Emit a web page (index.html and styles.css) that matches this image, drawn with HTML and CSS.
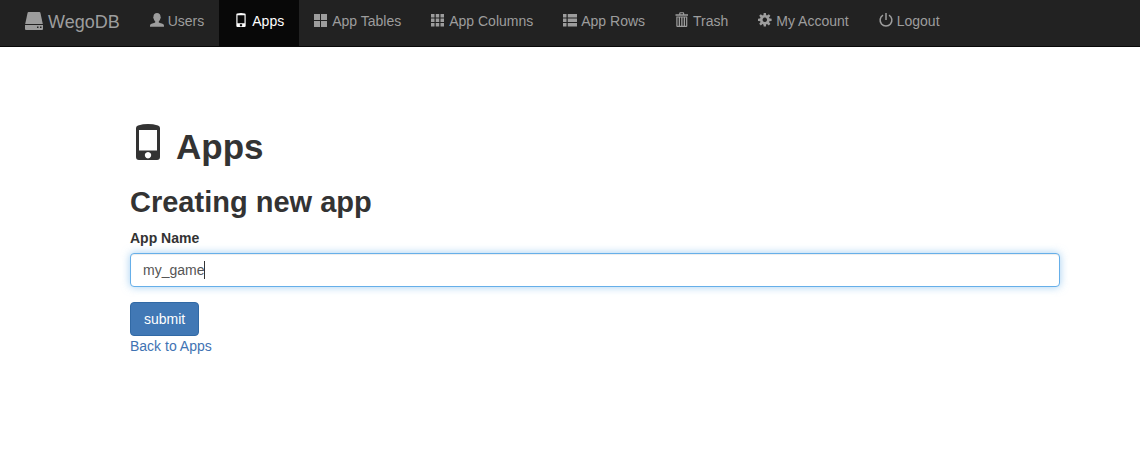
FILE: index.html
```html
<!DOCTYPE html>
<html lang="en">
<head>
<meta charset="utf-8">
<title>WegoDB - Apps</title>
<link rel="stylesheet" href="styles.css">
</head>
<body>
<nav class="navbar">
  <a class="brand" href="#"><svg class="icon" viewBox="0 0 18 18" aria-hidden="true"><path d="M3.5 0h11q.7 0 .9.7L17.800 12H.2L2.600.700Q2.800 0 3.500 0z"/><path fill-rule="evenodd" d="M0 13h18v4q0 1-1 1H1q-1 0-1-1zM12 14.500v1.500h1.500v-1.500zM15 14.500v1.500h1.500v-1.500z"/></svg>WegoDB</a>
  <ul class="nav">
    <li><a class="nav-link" href="#"><svg class="icon" viewBox="0 0 14 14" aria-hidden="true"><path d="M7 0c2.200 0 3.500 1.300 3.500 3.400 0 .5.300.6.300 1.200s-.4 1-.6 1.300C9.900 7.300 9.200 7.900 8.800 8.400c-.3.700 0 1.100.8 1.400 1.500.5 3.300 1.100 4 1.700.400.4.4 1.200.4 2.300H0c0-1.100 0-1.900.4-2.300.7-.6 2.500-1.200 4-1.700.8-.3 1.100-.7.8-1.400C4.800 7.900 4.100 7.300 3.800 5.900c-.2-.3-.6-.7-.6-1.300s.3-.7.300-1.200C3.500 1.300 4.800 0 7 0z"/></svg>Users</a></li>
    <li><a class="nav-link active" href="#"><svg class="icon" viewBox="0 0 36 36" aria-hidden="true"><path fill-rule="evenodd" d="M6 4Q6 2 8 1.400 18-1.400 28 1.400 30 2 30 4V33q0 3-3 3H9q-3 0-3-3zM9 6v20.500h18V6zM18 28a3.200 3.200 0 1 0 .01 0z"/></svg>Apps</a></li>
    <li><a class="nav-link" href="#"><svg class="icon" viewBox="0 0 14 14" aria-hidden="true"><path d="M0 1h6v6H0zM7 1h6v6H7zM0 8h6v6H0zM7 8h6v6H7z"/></svg>App Tables</a></li>
    <li><a class="nav-link" href="#"><svg class="icon" viewBox="0 0 14 14" aria-hidden="true"><path d="M0 1h3.500v3.500H0zM4.750 1h3.500v3.500h-3.500zM9.500 1H13v3.500H9.500zM0 5.500h3.500V9H0zM4.750 5.500h3.500V9h-3.500zM9.500 5.500H13V9H9.500zM0 10h3.500v3.500H0zM4.750 10h3.500v3.500h-3.500zM9.500 10H13v3.500H9.500z"/></svg>App Columns</a></li>
    <li><a class="nav-link" href="#"><svg class="icon" viewBox="0 0 14 14" aria-hidden="true"><path d="M0 1h3.500v3.500H0zM4.750 1H14v3.500H4.750zM0 5.500h3.500V9H0zM4.750 5.500H14V9H4.750zM0 10h3.500v3.500H0zM4.750 10H14v3.500H4.750z"/></svg>App Rows</a></li>
    <li><a class="nav-link" href="#"><svg class="icon" viewBox="0 0 14 14" aria-hidden="true"><path fill-rule="evenodd" d="M4.200 1.300V.2Q4.200-.8 5.200-.8h3q1 0 1 1v1.100H13V2.700H.500V1.300zM5.400 1.300H8V.2H5.400z"/><path fill-rule="evenodd" d="M1.300 3.400h11V13q0 1-1 1h-9q-1 0-1-1zM2.500 4.600V12.800h1.200V4.600zM5 4.600v8.200h1.200V4.600zM7.500 4.600v8.200h1.200V4.600zM10 4.600v8.200h1.100V4.600z"/></svg>Trash</a></li>
    <li><a class="nav-link" href="#"><svg class="icon" viewBox="0 0 14 14" aria-hidden="true"><path d="M5.700 0h2.200l.4 3H5.300zM5.300 10.600h3l-.4 3H5.700z"/><path d="M0 5.700l3-.4v3l-3-.4zM13.600 5.700l-3-.4v3l3-.4z"/><path transform="rotate(45 6.800 6.800)" d="M5.700 0h2.200l.4 3H5.300zM5.300 10.600h3l-.4 3H5.700zM0 5.700l3-.4v3l-3-.4zM13.600 5.700l-3-.4v3l3-.4z"/><path class="ring" d="M6.800 3.300a3.500 3.500 0 1 0 .01 0z"/></svg>My Account</a></li>
    <li><a class="nav-link" href="#"><svg class="icon" viewBox="0 0 14 14" aria-hidden="true"><path class="line" d="M4 2.100a5.900 5.900 0 1 0 6 0M7 0v7"/></svg>Logout</a></li>
  </ul>
</nav>
<main class="content">
  <h1 class="title"><svg class="icon" viewBox="0 0 36 36" aria-hidden="true"><path fill-rule="evenodd" d="M6 4Q6 2 8 1.400 18-1.400 28 1.400 30 2 30 4V33q0 3-3 3H9q-3 0-3-3zM9 6v20.500h18V6zM18 28a3.200 3.200 0 1 0 .01 0z"/></svg>Apps</h1>
  <h2 class="subtitle">Creating new app</h2>
  <form class="form">
    <label class="label" for="app-name">App Name</label>
    <div class="field">
      <input class="input" id="app-name" type="text" value="my_game">
      <span class="caret"></span>
    </div>
    <button class="submit" type="submit">submit</button>
  </form>
  <a class="back" href="#">Back to Apps</a>
</main>
</body>
</html>
```
FILE: styles.css
```css
* { box-sizing: border-box; }
body {
  margin: 0;
  background: #fff;
  color: #333;
  font: 14px/20px "Liberation Sans", Arial, sans-serif;
}
a { text-decoration: none; }
.icon {
  flex: none;
  width: 1em;
  height: 1em;
  fill: currentColor;
  overflow: visible;
}
.line, .ring { fill: none; stroke: currentColor; }
.line { stroke-width: 1.5; }
.ring { stroke-width: 2.6; }
.navbar {
  display: flex;
  padding-left: 10px;
  background: #222;
  border-bottom: 1px solid #080808;
}
.brand, .nav-link {
  display: flex;
  color: #9d9d9d;
  padding: 11px 15px 15px;
  white-space: nowrap;
}
.brand {
  gap: 5px;
  font-size: 18px;
  padding-top: 12px;
  padding-bottom: 14px;
}
.nav {
  display: flex;
  margin: 0;
  padding: 0;
  list-style: none;
}
.nav-link { gap: 4px; }
.nav-link .icon { margin-top: 2px; }
.active { color: #fff; background: #080808; }
.content { padding: 76px 80px 40px 130px; }
.title, .subtitle {
  margin: 0;
  font-weight: 700;
}
.title {
  display: flex;
  gap: 10px;
  font-size: 35px;
  line-height: 48px;
}
.title .icon { width: 36px; height: 36px; margin-top: 1px; }
.subtitle { margin-top: 13px; font-size: 29px; line-height: 36px; }
.label {
  display: block;
  margin: 8px 0 5px;
  font-weight: 700;
}
.field { position: relative; margin-bottom: 15px; }
.input {
  display: block;
  width: 100%;
  height: 34px;
  padding: 6px 12px;
  border: 1px solid #66afe9;
  border-radius: 4px;
  outline: 0;
  background: #fff;
  color: #555;
  font: inherit;
  box-shadow: inset 0 1px 1px rgba(0, 0, 0, .075), 0 0 8px rgba(102, 175, 233, .6);
}
.caret {
  position: absolute;
  left: 74px;
  top: 8px;
  width: 1px;
  height: 18px;
  background: #333;
}
.submit {
  display: block;
  padding: 6px 13px;
  border: 1px solid #3169a5;
  border-radius: 4px;
  background: #4178b5;
  color: #fff;
  font: inherit;
}
.back { color: #3f73b3; }
```
